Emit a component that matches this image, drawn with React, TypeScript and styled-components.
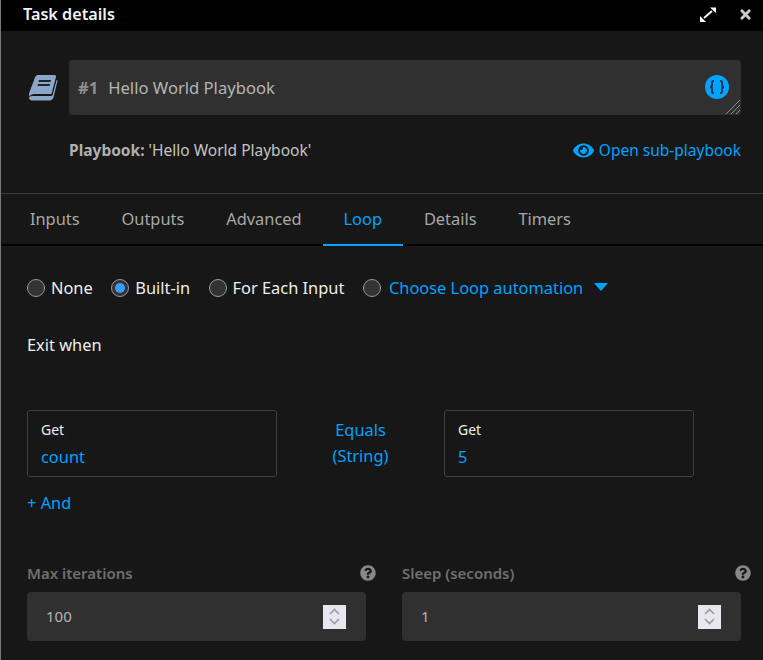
import React from 'react'
import styled, { createGlobalStyle } from 'styled-components'
import { FaEye, FaTimes, FaQuestionCircle } from 'react-icons/fa'

const blue = '#00a3ff'
const font = '"Noto Sans", "Open Sans", sans-serif'

const GlobalStyle = createGlobalStyle`
  html, body {
    margin: 0;
    height: 100%;
    background: #171717;
  }
  * {
    box-sizing: border-box;
  }
`

const Panel = styled.div`
  width: 763px;
  height: 660px;
  overflow: hidden;
  background: #171717;
  border-left: 1px solid #777;
  font-family: ${font};
  font-size: 16.4px;
  color: #eee;
`

const Header = styled.div`
  height: 31px;
  background: #000;
  display: flex;
  align-items: center;
  justify-content: space-between;
  padding: 0 10px 3px 22px;
  font-weight: 600;
  font-size: 16.2px;
  color: #f2f2f2;
`

const HeaderIcons = styled.div`
  display: flex;
  align-items: center;
  gap: 21px;
  color: #fff;
`

const TitleBlock = styled.div`
  padding: 29px 22px 0 27px;
  height: 163px;
  border-bottom: 1px solid #3a3a3a;
`

const TitleRow = styled.div`
  display: flex;
  align-items: center;
  gap: 11px;
`

const TitleField = styled.div`
  position: relative;
  flex: 1;
  height: 55px;
  background: #303030;
  border-radius: 4px;
  display: flex;
  align-items: center;
  gap: 10px;
  padding: 0 9px;
  font-size: 16.6px;
  color: #b4b4b4;
`

const TaskNumber = styled.span`
  font-weight: 700;
  color: #8f8f8f;
`

const BracesBadge = styled.div`
  position: absolute;
  right: 12px;
  top: 15px;
  width: 24px;
  height: 24px;
  border-radius: 50%;
  background: ${blue};
  display: flex;
  align-items: center;
  justify-content: center;
`

const ResizeGrip = styled.svg`
  position: absolute;
  right: 1px;
  bottom: 1px;
`

const PlaybookRow = styled.div`
  display: flex;
  align-items: center;
  justify-content: space-between;
  margin: 24px 0 0 41px;
  font-size: 15.5px;
  color: #c4c4c4;
  b {
    font-weight: 700;
    color: #b0b0b0;
  }
`

const OpenLink = styled.a`
  display: flex;
  align-items: center;
  gap: 5px;
  color: ${blue};
`

const Tabs = styled.div`
  display: flex;
  height: 52px;
  padding-left: 8px;
  border-bottom: 2px solid #000;
`

const Tab = styled.div<{ $active?: boolean }>`
  padding: 13px 21px 0 20.9px;
  height: 52px;
  color: ${(p) => (p.$active ? blue : '#a8a8a8')};
  border-bottom: 2px solid ${(p) => (p.$active ? blue : 'transparent')};
`

const Content = styled.div`
  padding: 0 21px 0 26px;
`

const RadioRow = styled.div`
  display: flex;
  align-items: center;
  gap: 18.5px;
  height: 30px;
  margin-top: 26px;
`

const RadioItem = styled.label<{ $blue?: boolean }>`
  display: flex;
  align-items: center;
  gap: ${(p) => (p.$blue ? '8px' : '6px')};
  color: ${(p) => (p.$blue ? blue : '#eee')};
`

const RadioDot = styled.span<{ $on?: boolean }>`
  width: 18px;
  height: 18px;
  margin-top: 2px;
  border-radius: 50%;
  background: #333;
  border: 1px solid #999;
  display: flex;
  align-items: center;
  justify-content: center;
  &::after {
    content: '';
    width: 10px;
    height: 10px;
    border-radius: 50%;
    background: ${(p) => (p.$on ? '#3b9bff' : 'transparent')};
  }
`

const Caret = styled.span`
  width: 0;
  height: 0;
  margin-left: 3px;
  margin-bottom: 1px;
  border-left: 7px solid transparent;
  border-right: 7px solid transparent;
  border-top: 8px solid ${blue};
`

const ExitLabel = styled.div`
  margin-top: 31px;
  height: 22px;
`

const ConditionRow = styled.div`
  display: flex;
  align-items: center;
  margin-top: 55px;
`

const ConditionBox = styled.div`
  width: 250px;
  height: 67px;
  border: 1px solid #404040;
  border-radius: 3px;
  padding: 9px 13px;
  font-size: 14px;
  color: #eee;
`

const ConditionValue = styled.div`
  margin-top: 6px;
  font-size: 16.4px;
  color: ${blue};
`

const Operator = styled.div`
  width: 167px;
  padding-bottom: 2px;
  text-align: center;
  line-height: 26px;
  color: ${blue};
`

const AddAnd = styled.div`
  margin-top: 14px;
  color: ${blue};
`

const FieldGrid = styled.div`
  display: grid;
  grid-template-columns: 339px 339px;
  gap: 36px;
  margin-top: 48px;
`

const FieldHead = styled.div`
  display: flex;
  align-items: center;
  justify-content: space-between;
  height: 22px;
  margin-right: -10px;
  font-size: 15px;
  font-weight: 600;
  color: #6f6f6f;
`

const NumberBox = styled.div`
  margin-top: 8px;
  height: 49px;
  background: #303030;
  border-radius: 4px;
  display: flex;
  align-items: center;
  justify-content: space-between;
  padding: 0 20px 2px 19px;
  color: #b4b4b4;
  font-size: 15px;
`

const Spinner = styled.div`
  width: 23px;
  height: 24px;
  margin-top: 2px;
  background: #e8e6ef;
  display: flex;
  align-items: center;
  justify-content: center;
`

const BookIcon = () => (
  <svg width="30" height="27" viewBox="0 0 30 27" fill="#8ba6c6" style={{ flexShrink: 0 }}>
    <path d="M10 1H26.5c1.2 0 1.8 1 1.5 2L23.5 20H6c-2 0-3.500 1-4.500 2.500L1 21c0-1 .2-2 .5-3L7 3.500C7.600 2 8.600 1 10 1z" />
    <path d="M5.500 22H23c.8 0 1.300-.3 1.600-1L28.600 6l1 .6-4 16.400c-.6 2.200-2 3.600-4 3.600H6c-3 0-5-1-5-2.600 0-1.400 2-2.400 4.500-2z" />
    <path d="M11 6H23L22.500 8H10.500zM10 10H22L21.500 12H9.500z" fill="#1c2430" />
  </svg>
)

const ExpandIcon = () => (
  <svg width="18" height="17" viewBox="0 0 18 17" fill="#fff" stroke="#fff">
    <path d="M5 12L13 5" strokeWidth="1.800" />
    <path d="M11 1.500h6v5.500zM1 10l6 6H1z" strokeWidth="0" />
  </svg>
)

const BracesIcon = () => (
  <svg width="16" height="14" viewBox="0 0 16 14" fill="none" stroke="#17384d" strokeWidth="2">
    <path d="M5 1H4C3 1 3 2 3 3v2c0 1-.5 2-2 2 1.500 0 2 1 2 2v2c0 1 0 2 1 2h1" />
    <path d="M11 1h1c1 0 1 1 1 2v2c0 1 .5 2 2 2-1.500 0-2 1-2 2v2c0 1 0 2-1 2h-1" />
  </svg>
)

const SpinIcon = () => (
  <Spinner>
    <svg width="11" height="17" viewBox="0 0 11 17" fill="none" stroke="#9c9aa6" strokeWidth="1.6">
      <path d="M1 6l4.5-4.5L10 6" />
      <path d="M1 11l4.5 4.5L10 11" />
    </svg>
  </Spinner>
)

const App = () => {
  const tabs = ['Inputs', 'Outputs', 'Advanced', 'Loop', 'Details', 'Timers']
  return (
    <Panel>
      <GlobalStyle />
      <Header>
        <span>Task details</span>
        <HeaderIcons>
          <ExpandIcon />
          <FaTimes size={15} color="#ccc" />
        </HeaderIcons>
      </Header>
      <TitleBlock>
        <TitleRow>
          <BookIcon />
          <TitleField>
            <TaskNumber>#1</TaskNumber>
            Hello World Playbook
            <BracesBadge>
              <BracesIcon />
            </BracesBadge>
            <ResizeGrip width="14" height="14" viewBox="0 0 14 14" stroke="#8a8a8a" strokeWidth="1">
              <path d="M0 14L14 0M5 14L14 5M10 14L14 10" />
            </ResizeGrip>
          </TitleField>
        </TitleRow>
        <PlaybookRow>
          <span>
            <b>Playbook:</b> 'Hello World Playbook'
          </span>
          <OpenLink>
            <FaEye size={21} />
            Open sub-playbook
          </OpenLink>
        </PlaybookRow>
      </TitleBlock>
      <Tabs>
        {tabs.map((t) => (
          <Tab key={t} $active={t === 'Loop'}>
            {t}
          </Tab>
        ))}
      </Tabs>
      <Content>
        <RadioRow>
          <RadioItem>
            <RadioDot />
            None
          </RadioItem>
          <RadioItem>
            <RadioDot $on />
            Built-in
          </RadioItem>
          <RadioItem>
            <RadioDot />
            For Each Input
          </RadioItem>
          <RadioItem $blue>
            <RadioDot />
            Choose Loop automation
            <Caret />
          </RadioItem>
        </RadioRow>
        <ExitLabel>Exit when</ExitLabel>
        <ConditionRow>
          <ConditionBox>
            Get
            <ConditionValue>count</ConditionValue>
          </ConditionBox>
          <Operator>
            Equals
            <br />
            (String)
          </Operator>
          <ConditionBox>
            Get
            <ConditionValue>5</ConditionValue>
          </ConditionBox>
        </ConditionRow>
        <AddAnd>+ And</AddAnd>
        <FieldGrid>
          <div>
            <FieldHead>
              Max iterations
              <FaQuestionCircle size={16} color="#888" />
            </FieldHead>
            <NumberBox>
              100
              <SpinIcon />
            </NumberBox>
          </div>
          <div>
            <FieldHead>
              Sleep (seconds)
              <FaQuestionCircle size={16} color="#888" />
            </FieldHead>
            <NumberBox>
              1
              <SpinIcon />
            </NumberBox>
          </div>
        </FieldGrid>
      </Content>
    </Panel>
  )
}

export default App
